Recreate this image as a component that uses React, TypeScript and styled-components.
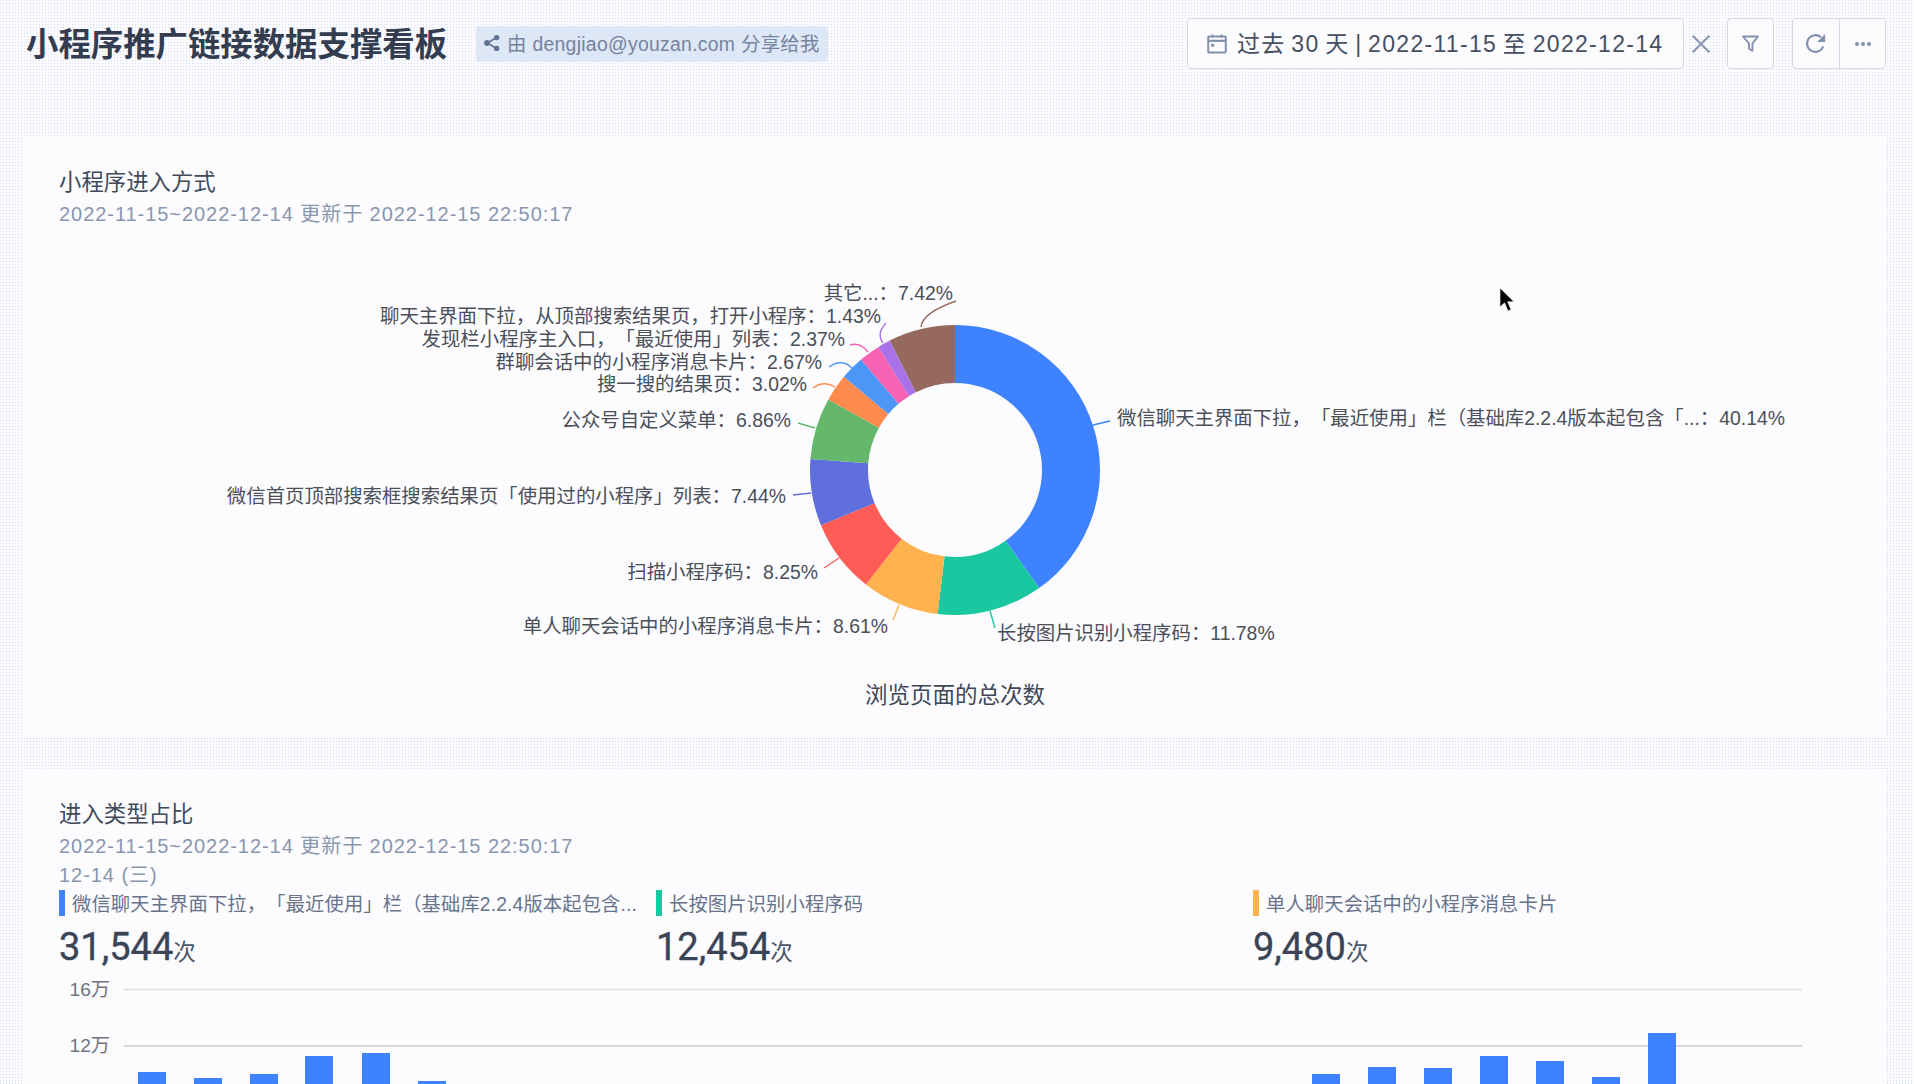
import React from "react";
import styled, { createGlobalStyle } from "styled-components";

const FONT = '"Liberation Sans", "Noto Sans CJK SC", sans-serif';

const Global = createGlobalStyle`
  html, body { margin: 0; padding: 0; height: 100%; overflow: hidden; }
  body { font-family: ${FONT}; background: #fcfcff; text-spacing-trim: space-all; }
`;

const Page = styled.div`
  position: relative;
  width: 1914px;
  height: 1084px;
  overflow: hidden;
  box-sizing: border-box;
  padding: 0 28px 0 23px;
  background-color: #fcfcff;
  background-image: radial-gradient(circle at 0.5px 0.5px, #d3dbf6 0.75px, transparent 0.85px);
  background-size: 3px 3px;
`;

const Header = styled.header`
  height: 87px;
  padding-top: 18px;
  box-sizing: border-box;
  display: flex;
  align-items: flex-start;
  justify-content: space-between;
  margin-bottom: 51px;
`;

const TitleGroup = styled.div`
  display: flex;
  align-items: center;
  height: 51px;
  padding-left: 3px;
`;

const Title = styled.h1`
  margin: 4px 0 0;
  font-size: 32.4px;
  font-weight: 700;
  line-height: 47px;
  color: #333d4f;
`;

const Chip = styled.div`
  margin-left: 29px;
  height: 36px;
  width: 352px;
  box-sizing: border-box;
  padding: 0 0 2px 7px;
  display: flex;
  align-items: center;
  gap: 6px;
  border-radius: 3px;
  background: #dde7f6;
  color: #75839f;
  font-size: 19.4px;
  letter-spacing: 0.28px;
  white-space: nowrap;
`;

const Controls = styled.div`
  display: flex;
  align-items: center;
`;

const DateBox = styled.div`
  width: 497px;
  height: 51px;
  box-sizing: border-box;
  padding: 0 0 3px 19px;
  display: flex;
  align-items: center;
  gap: 10px;
  background: #fcfcff;
  border: 1px solid #d2d8e6;
  border-radius: 4px;
  color: #454f61;
  font-size: 23px;
  letter-spacing: 1.3px;
  word-spacing: -2px;
  white-space: nowrap;
`;

const CalendarSvg = styled.svg`
  flex: none;
  margin-top: 3px;
`;

const Clear = styled.button`
  width: 43px;
  height: 51px;
  box-sizing: border-box;
  padding: 0 9px 0 0;
  border: 0;
  background: none;
  display: flex;
  align-items: center;
  justify-content: center;
`;

const IconButton = styled.button`
  width: 47px;
  height: 51px;
  padding: 0;
  display: flex;
  align-items: center;
  justify-content: center;
  background: #fcfcff;
  border: 1px solid #d2d8e6;
  border-radius: 4px;
`;

const ButtonGroup = styled.div`
  margin-left: 18px;
  display: flex;
  height: 51px;
  box-sizing: border-box;
  background: #fcfcff;
  border: 1px solid #d2d8e6;
  border-radius: 4px;
`;

const GroupItem = styled.button<{ $divided?: boolean }>`
  width: 46px;
  padding: 0;
  border: 0;
  border-left: ${(p) => (p.$divided ? "1px solid #d2d8e6" : "0")};
  background: none;
  display: flex;
  align-items: center;
  justify-content: center;
`;

const Card = styled.section<{ $gap?: number }>`
  background: #fcfcff;
  margin-top: ${(p) => p.$gap ?? 0}px;
  box-shadow: 0 1px 3px rgba(120, 135, 170, 0.08);
`;

const CardHead = styled.div<{ $height: number }>`
  height: ${(p) => p.$height}px;
  box-sizing: border-box;
  padding: 29px 36px 0;
`;

const CardTitle = styled.h2`
  margin: 0;
  font-size: 22.4px;
  font-weight: 400;
  line-height: 32px;
  color: #404a5b;
`;

const CardSub = styled.div`
  margin-top: 0;
  font-size: 20px;
  line-height: 30px;
  letter-spacing: 0.95px;
  color: #8a96ae;
  white-space: nowrap;
`;

const DateLine = styled(CardSub)`
  line-height: 29px;
`;

const Legend = styled.div`
  display: grid;
  grid-template-columns: 597px 597px 597px;
  padding: 0 36px;
`;

const LegendItem = styled.div`
  min-width: 0;
`;

const LegendLabel = styled.div<{ $color: string }>`
  height: 26px;
  display: flex;
  align-items: center;
  font-size: 19.3px;
  letter-spacing: 0.14px;
  color: #68738a;
  white-space: nowrap;
  &::before {
    content: "";
    flex: none;
    width: 6px;
    height: 26px;
    margin-right: 7px;
    background: ${(p) => p.$color};
  }
`;

const Metric = styled.div`
  margin-top: 8px;
  height: 46px;
  display: flex;
  align-items: baseline;
  font-family: Roboto, ${FONT};
  font-weight: 400;
  font-size: 38px;
  line-height: 46px;
  -webkit-text-stroke: 0.35px #3a4456;
  color: #3a4456;
`;

const Unit = styled.span`
  font-family: ${FONT};
  font-weight: 400;
  font-size: 22.5px;
  -webkit-text-stroke: 0;
  color: #4a5466;
`;

const ChartSvg = styled.svg`
  display: block;
  font-family: ${FONT};
`;

const Cursor = styled.svg`
  position: absolute;
  left: 1499px;
  top: 287px;
`;

type Slice = { pct: number; color: string };
const slices: Slice[] = [
  { pct: 40.14, color: "#3f82ff" },
  { pct: 11.78, color: "#19c7a0" },
  { pct: 8.61, color: "#ffb24d" },
  { pct: 8.25, color: "#ff5b57" },
  { pct: 7.44, color: "#5f70dc" },
  { pct: 6.86, color: "#64b76b" },
  { pct: 3.02, color: "#ff8a4e" },
  { pct: 2.67, color: "#4d95f6" },
  { pct: 2.37, color: "#f763b2" },
  { pct: 1.43, color: "#a972e8" },
  { pct: 7.43, color: "#96695f" },
];

const CX = 955;
const CY = 470;
const R = 145;
const r = 87;

function arcPath(a0: number, a1: number) {
  const p = (rad: number, a: number) => `${CX + rad * Math.sin(a)} ${CY - rad * Math.cos(a)}`;
  const large = a1 - a0 > Math.PI ? 1 : 0;
  return `M${p(R, a0)}A${R} ${R} 0 ${large} 1 ${p(R, a1)}L${p(r, a1)}A${r} ${r} 0 ${large} 0 ${p(r, a0)}Z`;
}

function donut() {
  let acc = 0;
  return slices.map((s) => {
    const a0 = (acc / 100) * 2 * Math.PI;
    acc += s.pct;
    const a1 = (acc / 100) * 2 * Math.PI;
    return <path key={s.color} d={arcPath(a0, a1)} fill={s.color} />;
  });
}

const labels: { text: string; x: number; y: number; end?: boolean }[] = [
  { text: "其它...：7.42%", x: 953, y: 293, end: true },
  { text: "聊天主界面下拉，从顶部搜索结果页，打开小程序：1.43%", x: 881, y: 316, end: true },
  { text: "发现栏小程序主入口，「最近使用」列表：2.37%", x: 845, y: 339, end: true },
  { text: "群聊会话中的小程序消息卡片：2.67%", x: 822, y: 362, end: true },
  { text: "搜一搜的结果页：3.02%", x: 807, y: 384, end: true },
  { text: "公众号自定义菜单：6.86%", x: 791, y: 420, end: true },
  { text: "微信首页顶部搜索框搜索结果页「使用过的小程序」列表：7.44%", x: 786, y: 496, end: true },
  { text: "扫描小程序码：8.25%", x: 818, y: 572, end: true },
  { text: "单人聊天会话中的小程序消息卡片：8.61%", x: 888, y: 626, end: true },
  { text: "长按图片识别小程序码：11.78%", x: 997, y: 633 },
  { text: "微信聊天主界面下拉，「最近使用」栏（基础库2.2.4版本起包含「...：40.14%", x: 1117, y: 418 },
];

const leaders: { d: string; color: string }[] = [
  { d: "M1093 425L1110 421", color: "#3f82ff" },
  { d: "M990 611L995 628", color: "#19c7a0" },
  { d: "M899 605L893 620", color: "#ffb24d" },
  { d: "M839 558L824 568", color: "#ff5b57" },
  { d: "M811 493L793 495", color: "#5f70dc" },
  { d: "M815 428L798 423", color: "#64b76b" },
  { d: "M835 387Q824 380 813 388", color: "#ff8a4e" },
  { d: "M852 368Q842 358 829 367", color: "#4d95f6" },
  { d: "M868 352Q860 342 850 345", color: "#f763b2" },
  { d: "M883 343Q876 334 886 323", color: "#a972e8" },
  { d: "M921 327Q922 313 956 301", color: "#96695f" },
];

const leftBars: [number, number][] = [
  [138, 1072], [194, 1078], [250, 1074], [305, 1056], [362, 1053], [418, 1081],
];
const rightBars: [number, number][] = [
  [1312, 1074], [1368, 1067], [1424, 1068], [1480, 1056], [1536, 1061], [1592, 1077], [1648, 1033],
];

const ShareIcon = () => (
  <svg width="18" height="18" viewBox="0 0 18 18">
    <path d="M13.5 3.5L4.5 9L13.5 14.5" fill="none" stroke="#5f7391" strokeWidth="1.6" />
    <circle cx="13.7" cy="3.6" r="2.7" fill="#5f7391" />
    <circle cx="4" cy="9" r="2.9" fill="#5f7391" />
    <circle cx="13.7" cy="14.4" r="2.7" fill="#5f7391" />
  </svg>
);

const CalendarIcon = () => (
  <CalendarSvg width="20" height="20" viewBox="0 0 20 20" fill="none" stroke="#8290ae" strokeWidth="2">
    <rect x="1.2" y="2.6" width="17.6" height="16" rx="0.8" />
    <path d="M1.2 6.8H18.8" strokeWidth="2.2" />
    <path d="M5.5 0.6V3.5M14.5 0.6V3.5" />
    <rect x="4.2" y="9.8" width="3" height="3" fill="#8290ae" stroke="none" />
  </CalendarSvg>
);

const ClearIcon = () => (
  <svg width="20" height="20" viewBox="0 0 18 18" fill="none" stroke="#8c9ab6" strokeWidth="2">
    <path d="M1.5 1.5L16.5 16.5M16.5 1.5L1.5 16.5" />
  </svg>
);

const FilterIcon = () => (
  <svg width="17" height="17" viewBox="0 0 17 17" fill="none" stroke="#8290ae" strokeWidth="1.9">
    <path d="M1 1.5H16L10.4 8.5V15.8L7 13.8V8.5Z" strokeLinejoin="round" />
  </svg>
);

const RefreshIcon = () => (
  <svg width="22" height="22" viewBox="0 0 20 20" fill="none">
    <path d="M16.6 12.2A7.6 7.6 0 1 1 14.6 3.9" stroke="#8290ae" strokeWidth="1.9" />
    <path d="M18.3 0.8V8.2H11Z" fill="#8290ae" />
  </svg>
);

const DotsIcon = () => (
  <svg width="18" height="6" viewBox="0 0 18 6" fill="#8290ae">
    <circle cx="3" cy="3" r="2" />
    <circle cx="9" cy="3" r="2" />
    <circle cx="15" cy="3" r="2" />
  </svg>
);

export default function App() {
  return (
    <Page>
      <Global />
      <Header>
        <TitleGroup>
          <Title>小程序推广链接数据支撑看板</Title>
          <Chip>
            <ShareIcon />
            <span>由 dengjiao@youzan.com 分享给我</span>
          </Chip>
        </TitleGroup>
        <Controls>
          <DateBox>
            <CalendarIcon />
            <span>过去 30 天 | 2022-11-15 至 2022-12-14</span>
          </DateBox>
          <Clear aria-label="clear"><ClearIcon /></Clear>
          <IconButton aria-label="filter"><FilterIcon /></IconButton>
          <ButtonGroup>
            <GroupItem aria-label="refresh"><RefreshIcon /></GroupItem>
            <GroupItem $divided aria-label="more"><DotsIcon /></GroupItem>
          </ButtonGroup>
        </Controls>
      </Header>

      <Card>
        <CardHead $height={102}>
          <CardTitle>小程序进入方式</CardTitle>
          <CardSub>2022-11-15~2022-12-14 更新于 2022-12-15 22:50:17</CardSub>
        </CardHead>
        <ChartSvg width="1863" height="498" viewBox="23 240 1863 498">
          {donut()}
          {leaders.map((l) => (
            <path key={l.d} d={l.d} fill="none" stroke={l.color} strokeWidth="1.4" />
          ))}
          {labels.map((l) => (
            <text
              key={l.text}
              x={l.x}
              y={l.y + 7}
              fontSize="19.4"
              fill="#4b4f58"
              textAnchor={l.end ? "end" : "start"}
            >
              {l.text}
            </text>
          ))}
          <text x={CX} y={703} fontSize="22.5" fill="#3f4756" textAnchor="middle">
            浏览页面的总次数
          </text>
        </ChartSvg>
      </Card>

      <Card $gap={32}>
        <CardHead $height={120}>
          <CardTitle>进入类型占比</CardTitle>
          <CardSub>2022-11-15~2022-12-14 更新于 2022-12-15 22:50:17</CardSub>
          <DateLine>12-14 (三)</DateLine>
        </CardHead>
        <Legend>
          <LegendItem>
            <LegendLabel $color="#3f82ff">微信聊天主界面下拉，「最近使用」栏（基础库2.2.4版本起包含...</LegendLabel>
            <Metric>31,544<Unit>次</Unit></Metric>
          </LegendItem>
          <LegendItem>
            <LegendLabel $color="#19c7a0">长按图片识别小程序码</LegendLabel>
            <Metric>12,454<Unit>次</Unit></Metric>
          </LegendItem>
          <LegendItem>
            <LegendLabel $color="#ffb24d">单人聊天会话中的小程序消息卡片</LegendLabel>
            <Metric>9,480<Unit>次</Unit></Metric>
          </LegendItem>
        </Legend>
        <ChartSvg width="1863" height="114" viewBox="23 970 1863 114">
          <path d="M124 989.5H1802" stroke="#dcdcd8" strokeWidth="1.5" />
          <path d="M124 1046H1802" stroke="#d8d8da" strokeWidth="2" />
          <text x="110" y="996" fontSize="19.2" fill="#6e7480" textAnchor="end">16万</text>
          <text x="110" y="1052" fontSize="19.2" fill="#6e7480" textAnchor="end">12万</text>
          {[...leftBars, ...rightBars].map(([x, y]) => (
            <rect key={x} x={x} y={y} width="28" height={1084 - y} fill="#3f82ff" />
          ))}
        </ChartSvg>
      </Card>

      <Cursor width="18" height="28" viewBox="0 0 18 28">
        <path d="M1 1V20L5.6 15.8L9 24L12 22.6L8.7 14.8H15Z" fill="#000" stroke="#e8e8e8" strokeWidth="0.7" />
      </Cursor>
    </Page>
  );
}
